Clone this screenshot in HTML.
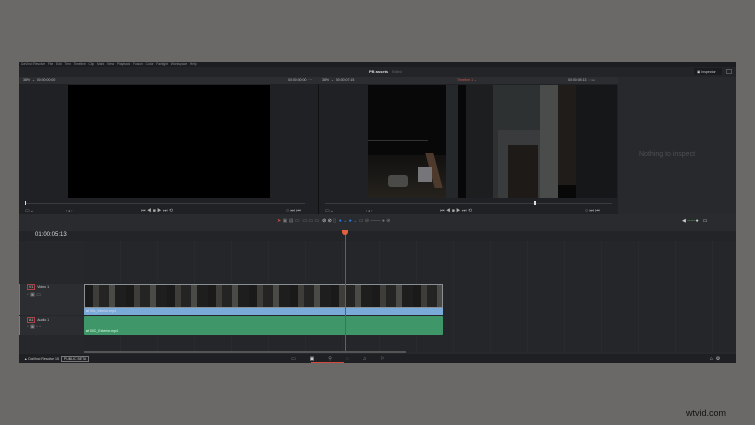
<!DOCTYPE html>
<html><head><meta charset="utf-8"><style>
*{margin:0;padding:0;box-sizing:border-box}
body{width:755px;height:425px;background:#6a6967;position:relative;overflow:hidden;font-family:"Liberation Sans",sans-serif}
.a{position:absolute}
.t{position:absolute;font-size:3.5px;color:#8a8b90;white-space:nowrap}
</style></head><body>
<div class="a" style="left:19px;top:62px;width:717px;height:301px;background:#27282c"></div>
<div class="a" style="left:19px;top:62px;width:717px;height:5px;background:#1c1d20"></div>
<div class="t" style="left:21px;top:62px;font-size:3.3px">DaVinci Resolve &nbsp; File &nbsp; Edit &nbsp; Trim &nbsp; Timeline &nbsp; Clip &nbsp; Mark &nbsp; View &nbsp; Playback &nbsp; Fusion &nbsp; Color &nbsp; Fairlight &nbsp; Workspace &nbsp; Help</div>
<div class="a" style="left:19px;top:67px;width:717px;height:10px;background:#232427"></div>
<div class="t" style="left:369px;top:69px;color:#ddd;font-size:4px;font-weight:bold">PB assets</div>
<div class="t" style="left:392px;top:69.5px;color:#666">Edited</div>
<div class="a" style="left:694px;top:68px;width:28px;height:7px;background:#1a1b1e;border-radius:1px"></div>
<div class="t" style="left:697px;top:69.5px;color:#ccc">▣ Inspector</div>
<div class="a" style="left:726px;top:69px;width:6px;height:5px;border:1px solid #555"></div>
<div class="a" style="left:19px;top:77px;width:599px;height:7px;background:#2c2d31"></div>
<div class="t" style="left:23px;top:78px;color:#bbb">38% &nbsp;⌄ &nbsp;00:00:00:00</div>
<div class="t" style="left:288px;top:78px;color:#bbb">00:00:00:00 &nbsp;···</div>
<div class="t" style="left:322px;top:78px;color:#bbb">38% &nbsp;⌄ &nbsp;00:00:07:15</div>
<div class="t" style="left:457px;top:78px;color:#d0564a">Timeline 1 ⌄</div>
<div class="t" style="left:568px;top:78px;color:#bbb">00:00:05:13 &nbsp;◌ ▭</div>
<div class="a" style="left:19px;top:84px;width:299px;height:130px;background:#202124"></div>
<div class="a" style="left:68px;top:85px;width:202px;height:113px;background:#000"></div>
<div class="a" style="left:319px;top:84px;width:299px;height:130px;background:#202124"></div>
<div class="a" style="left:318px;top:84px;width:1px;height:130px;background:#111"></div>
<div class="a" style="left:368px;top:85px;width:249px;height:113px;background:#080808;overflow:hidden">
 <div class="a" style="left:0;top:70px;width:80px;height:43px;background:linear-gradient(#121110,#25221d)"></div>
 <div class="a" style="left:78px;top:0;width:12px;height:113px;background:#25282a"></div>
 <div class="a" style="left:98px;top:0;width:30px;height:113px;background:#1c1e20"></div>
 <div class="a" style="left:125px;top:0;width:50px;height:113px;background:#2e3132"></div>
 <div class="a" style="left:130px;top:45px;width:50px;height:68px;background:#393b3c"></div>
 <div class="a" style="left:140px;top:60px;width:30px;height:53px;background:#1e1a18"></div>
 <div class="a" style="left:172px;top:0;width:18px;height:113px;background:#4a4c4c"></div>
 <div class="a" style="left:190px;top:0;width:18px;height:100px;background:#201c1a"></div>
 <div class="a" style="left:208px;top:0;width:41px;height:113px;background:#161718"></div>
 <div class="a" style="left:62px;top:68px;width:8px;height:35px;background:#4e3a2c;transform:skewX(15deg)"></div>
 <div class="a" style="left:20px;top:90px;width:20px;height:12px;background:#4a4a48;border-radius:3px"></div>
 <div class="a" style="left:50px;top:82px;width:14px;height:15px;background:#76767a"></div>
 <div class="a" style="left:0;top:55px;width:60px;height:1px;background:#333"></div>
</div>
<div class="a" style="left:25px;top:203px;width:280px;height:1px;background:#3a3b3f"></div>
<div class="a" style="left:25px;top:201px;width:1px;height:4px;background:#ddd"></div>
<div class="a" style="left:325px;top:203px;width:287px;height:1px;background:#3a3b3f"></div>
<div class="a" style="left:534px;top:201px;width:1.5px;height:4px;background:#ddd"></div>
<div class="t" style="left:25px;top:208px;font-size:5px">▭⌄</div>
<div class="t" style="left:66px;top:209px">‹ ● ›</div>
<div class="t" style="left:141px;top:208px;font-size:5px;color:#aaa">⏮ ◀ ■ ▶ ⏭ ⟲</div>
<div class="t" style="left:286px;top:208px;font-size:5px;color:#aaa">○ ⏭ ⏮</div>
<div class="t" style="left:325px;top:208px;font-size:5px">▭⌄</div>
<div class="t" style="left:366px;top:209px">‹ ● ›</div>
<div class="t" style="left:440px;top:208px;font-size:5px;color:#aaa">⏮ ◀ ■ ▶ ⏭ ⟲</div>
<div class="t" style="left:585px;top:208px;font-size:5px;color:#aaa">○ ⏭ ⏮</div>
<div class="a" style="left:618px;top:77px;width:118px;height:137px;background:#28292d"></div>
<div class="t" style="left:639px;top:151px;font-size:7px;color:#4e4f54">Nothing to inspect</div>
<div class="a" style="left:19px;top:214px;width:717px;height:17px;background:#2a2b2f"></div>
<div class="t" style="left:277px;top:218px;font-size:5px;color:#777"><span style="color:#d04a40">➤</span> ▣ ▤ ▭ &nbsp;▭ ▭ ▭ &nbsp;<span style="color:#ddd">⊘ ⊘</span> ▯ &nbsp;<span style="color:#2f7fe0">● ⌄ ● ⌄</span> ▭ ⊖ —— ● ⊕</div>
<div class="t" style="left:682px;top:218px;font-size:5px;color:#ccc">◀ <span style="color:#5c5">-----</span>● &nbsp; ▭</div>
<div class="a" style="left:19px;top:231px;width:717px;height:10px;background:#232428"></div>
<div class="t" style="left:35px;top:232px;font-size:6px;color:#ddd">01:00:05:13</div>
<div class="a" style="left:84px;top:241px;width:652px;height:111px;background:#25262a;background-image:repeating-linear-gradient(90deg,transparent 0 36px,#292a2e 36px 37px)"></div>
<div class="a" style="left:19px;top:241px;width:65px;height:111px;background:#26272b"></div>
<div class="a" style="left:19px;top:284px;width:65px;height:31px;background:#2c2d31;border-left:1px solid #5a7aa0"></div>
<div class="a" style="left:19px;top:316px;width:65px;height:19px;background:#2c2d31;border-left:1px solid #4a9a6a"></div>
<div class="t" style="left:27px;top:285px;color:#ccc"><span style="border:0.5px solid #a44;padding:0 1px">V1</span> &nbsp;Video 1</div>
<div class="t" style="left:27px;top:292px;font-size:5px">▫ ▣ ▭</div>
<div class="t" style="left:27px;top:318px;color:#ccc"><span style="border:0.5px solid #a44;padding:0 1px">A1</span> &nbsp;Audio 1</div>
<div class="t" style="left:27px;top:324px;font-size:5px">▫ ▣ ▫ ▫</div>
<div class="a" style="left:84px;top:284px;width:359px;height:24px;border:1px solid #8a8f96;background:repeating-linear-gradient(90deg,#1a1a1a 0 8px,#3e3d3a 8px 14px,#242424 14px 24px,#4a4a47 24px 30px,#1e1e1e 30px 41px)"></div>
<div class="a" style="left:84px;top:308px;width:359px;height:7px;background:#7aaad8"></div>
<div class="t" style="left:86px;top:309px;color:#dde">⇄ 00c_Interior.mp4</div>
<div class="a" style="left:84px;top:316px;width:359px;height:19px;background:#3e9669;border-radius:1px"></div>
<div class="t" style="left:86px;top:329px;color:#dfd">⇄ 00C_Exterior.mp4</div>
<div class="a" style="left:345px;top:231px;width:1px;height:121px;background:#b0403a"></div>
<div class="a" style="left:342px;top:230px;width:6px;height:5px;background:#e06040;border-radius:0 0 3px 3px"></div>
<div class="a" style="left:84px;top:351px;width:322px;height:1.5px;background:#555"></div>
<div class="a" style="left:19px;top:354px;width:717px;height:9px;background:#1f2023"></div>
<div class="t" style="left:24px;top:357px;color:#ccc">▲ DaVinci Resolve 15 &nbsp;<span style="border:0.5px solid #777;padding:0 2px">PUBLIC BETA</span></div>
<div class="t" style="left:291px;top:356px;font-size:5px;color:#888">▭ &nbsp; &nbsp; &nbsp; &nbsp; &nbsp;<span style="color:#ccc">▣</span> &nbsp; &nbsp; &nbsp; &nbsp; &nbsp;⚲ &nbsp; &nbsp; &nbsp; &nbsp; &nbsp;◌ &nbsp; &nbsp; &nbsp; &nbsp; &nbsp;♫ &nbsp; &nbsp; &nbsp; &nbsp; &nbsp;⚐</div>
<div class="a" style="left:311px;top:362px;width:33px;height:1px;background:#d04a40"></div>
<div class="t" style="left:710px;top:356px;font-size:5px;color:#ccc">⌂ &nbsp;⚙</div>
<div class="t" style="left:686px;top:408px;font-size:9px;color:#111">wtvid.com</div>
</body></html>
